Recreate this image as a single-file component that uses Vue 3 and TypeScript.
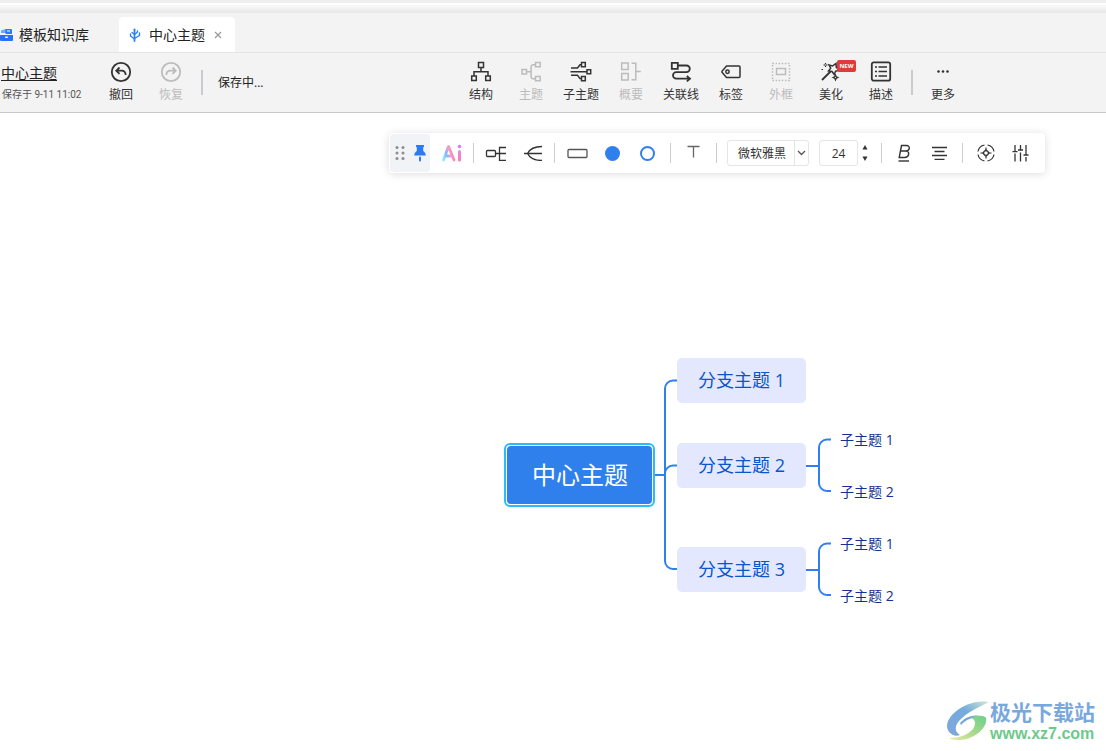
<script setup lang="ts">
import { ref } from 'vue'

interface Tool {
  id: string
  label: string
  disabled?: boolean
  badge?: string
}
interface MapNode {
  text: string
  kind: 'root' | 'branch' | 'leaf'
  x: number
  y: number
}

const tools: Tool[] = [
  { id: 'structure', label: '结构' },
  { id: 'topic', label: '主题', disabled: true },
  { id: 'subtopic', label: '子主题' },
  { id: 'summary', label: '概要', disabled: true },
  { id: 'relation', label: '关联线' },
  { id: 'tag', label: '标签' },
  { id: 'frame', label: '外框', disabled: true },
  { id: 'beautify', label: '美化', badge: 'NEW' },
  { id: 'describe', label: '描述' },
]

const nodes: MapNode[] = [
  { text: '中心主题', kind: 'root', x: 504, y: 330 },
  { text: '分支主题 1', kind: 'branch', x: 677, y: 245 },
  { text: '分支主题 2', kind: 'branch', x: 677, y: 330 },
  { text: '分支主题 3', kind: 'branch', x: 677, y: 434 },
  { text: '子主题 1', kind: 'leaf', x: 840, y: 317 },
  { text: '子主题 2', kind: 'leaf', x: 840, y: 369 },
  { text: '子主题 1', kind: 'leaf', x: 840, y: 421 },
  { text: '子主题 2', kind: 'leaf', x: 840, y: 473 },
]

const fontFamily = ref('微软雅黑')
const fontSize = ref(24)
</script>

<template>
  <div class="app">
    <div class="title-strip"></div>

    <nav class="tabs">
      <button class="tab library" type="button">
        <svg class="drawer" width="13" height="14" viewBox="0 0 13 14">
          <path d="M1 2.500L6 1v4H1z" fill="#6ea6ff" />
          <path d="M5.500 1h5.500a1 1 0 0 1 1 1v4H5.500z" fill="#2b7bf7" />
          <path d="M7 3h3" stroke="#fff" stroke-width="1" />
          <path d="M0 7h13v5a1 1 0 0 1-1 1H1a1 1 0 0 1-1-1z" fill="#2473f6" />
          <rect x="5" y="8.500" width="3" height="1.500" rx=".7" fill="#fff" />
        </svg>
        <span>模板知识库</span>
      </button>
      <div class="tab active">
        <svg width="12" height="14" viewBox="0 0 12 14" fill="none" stroke="#2f80ed" stroke-linecap="round">
          <path d="M5.500 13V1.300" stroke-width="1.800" />
          <path d="M5.500 11L1.500 8V6M5.500 10.500L10.500 7.500V5M5.500 6.500L3 4.500M5.500 6.500L8.500 4V3" stroke-width="1.400" stroke-linejoin="round" />
        </svg>
        <span>中心主题</span>
        <button class="close" type="button" aria-label="关闭">
          <svg width="8" height="8" viewBox="0 0 8 8"><path d="M1 1l6 6M7 1L1 7" stroke="#999" stroke-width="1.200" /></svg>
        </button>
      </div>
    </nav>

    <header class="ribbon">
      <div class="doc">
        <a class="doc-name" href="#">中心主题</a>
        <span class="doc-saved">保存于 9-11 11:02</span>
      </div>
      <button class="tool" type="button">
        <svg width="22" height="22" viewBox="0 0 22 22" fill="none" stroke="#333" stroke-width="1.800">
          <circle cx="11" cy="11" r="9.200" />
          <path d="M9.500 6.500L6.300 9.700l3.200 3.200M6.500 9.700h5c2.500 0 4 1.500 4.200 4.300" />
        </svg>
        <span>撤回</span>
      </button>
      <button class="tool" type="button" disabled>
        <svg width="22" height="22" viewBox="0 0 22 22" fill="none" stroke="#bcbcbc" stroke-width="1.800">
          <circle cx="11" cy="11" r="9.200" />
          <path d="M12.500 6.500l3.200 3.200-3.200 3.200M15.500 9.700h-5c-2.500 0-4 1.500-4.200 4.300" />
        </svg>
        <span>恢复</span>
      </button>
      <i class="rule"></i>
      <span class="saving">保存中...</span>

      <div class="tools">
        <button v-for="t in tools" :key="t.id" class="tool" type="button" :disabled="t.disabled">
          <svg width="22" height="22" viewBox="0 0 22 22" fill="none" stroke="currentColor" stroke-width="1.500">
            <template v-if="t.id === 'structure'">
              <path d="M8.500 1.500h5v5h-5zM1.700 15h4.600v4.600H1.700zM15.700 15h4.600v4.600h-4.600zM11 6.500v4.200M4 15v-4.300h14V15" />
            </template>
            <template v-else-if="t.id === 'topic'">
              <path d="M2 8.500h4.500v4.500H2zM15.500 1.500h4.700v4.300h-4.700zM15.500 15.500h4.700v4.300h-4.700zM6.500 10.700h4.500M15.500 3.700h-2.400a2 2 0 0 0-2 2v10a2 2 0 0 0 2 2h2.400" />
            </template>
            <template v-else-if="t.id === 'subtopic'">
              <path d="M11.500 1.500H15.300v4.200h-3.800zM17 8.700h3.700v4H17zM11.500 15.500h3.800v4.200h-3.800z" />
              <path d="M.5 10.700H17M1 7h6.500L10 3.700h1.500M1 14.300h6.500L10 17.600h1.500" />
            </template>
            <template v-else-if="t.id === 'summary'">
              <path d="M1.700 2h6.500v6.500H1.700zM1.700 12.500h6.500V19H1.700zM11.500 2.300h4.300v16.400h-4.300M15.800 10.500h5" />
            </template>
            <template v-else-if="t.id === 'relation'">
              <path d="M1.800 1.800h6v6h-6z" stroke-width="1.800" />
              <path d="M7.800 4.500h8.700a3.300 3.300 0 0 1 0 6.600H6.300a3.300 3.300 0 0 0 0 6.600h13M16.800 15l3.200 2.700-3.200 2.700" stroke-width="1.800" />
            </template>
            <template v-else-if="t.id === 'tag'">
              <path d="M6.500 5H19a1 1 0 0 1 1 1v9.500a1 1 0 0 1-1 1H6.500L2 11.300v-1.100z" />
              <circle cx="7.500" cy="10.700" r="1.700" />
            </template>
            <template v-else-if="t.id === 'frame'">
              <path d="M2.500 2.500h17v17h-17z" stroke-dasharray="1.500 1.590" />
              <path d="M6.500 7.500h9v6h-9z" />
            </template>
            <template v-else-if="t.id === 'beautify'">
              <path d="M2 19L10.500 10.500" stroke-width="1.800" />
              <path d="M9 4l3.500 1L16 2.500l.3 4 3 2.500-3.800 1.300-1.300 3.200-2.200-3-3.500-.5 2.200-2.800z" stroke-width="1.500" />
              <path d="M15.500 14l.8 1.700 1.700.8-1.700.8-.8 1.700-.8-1.700-1.700-.8 1.700-.8z" stroke-width="1.200" />
              <path d="M5.500 2v1.500M5.500 4.500V6M3.500 4h1.500M6 4h1.500M1.500 8.500H3" stroke-width="1.200" />
            </template>
            <template v-else>
              <rect x="1.800" y="1.300" width="18.400" height="18.400" rx="2" stroke-width="1.800" />
              <path d="M5 6h2M5 10.500h2M5 15h2M8.500 6H17M8.500 10.500H17M8.500 15H17" stroke-width="1.700" />
            </template>
          </svg>
          <span>{{ t.label }}</span>
          <b v-if="t.badge" class="badge">{{ t.badge }}</b>
        </button>
        <i class="rule"></i>
        <button class="tool" type="button">
          <svg width="22" height="22" viewBox="0 0 22 22" fill="#333">
            <circle cx="6.500" cy="10.500" r="1.300" /><circle cx="11" cy="10.500" r="1.300" /><circle cx="15.500" cy="10.500" r="1.300" />
          </svg>
          <span>更多</span>
        </button>
      </div>
    </header>

    <main class="canvas">
      <div class="format-bar">
        <div class="handle">
          <svg width="10" height="16" viewBox="0 0 10 16" fill="#8c8c8c">
            <circle cx="2" cy="2.500" r="1.500" /><circle cx="8" cy="2.500" r="1.500" />
            <circle cx="2" cy="8" r="1.500" /><circle cx="8" cy="8" r="1.500" />
            <circle cx="2" cy="13.500" r="1.500" /><circle cx="8" cy="13.500" r="1.500" />
          </svg>
          <button class="pin" type="button" aria-label="固定">
            <svg width="12" height="18" viewBox="0 0 12 18" fill="#2b7bf7">
              <path d="M2 1h8v1.500L9.200 3.500V7c1.500.8 2.400 2.200 2.600 4.500H.2C.4 9.200 1.300 7.800 2.800 7V3.500L2 2.500z" />
              <rect x="5" y="12.500" width="2" height="5" rx="1" />
            </svg>
          </button>
        </div>

        <div class="group tight">
          <button class="fmt" type="button" aria-label="AI">
            <svg width="22" height="20" viewBox="0 0 22 20" fill="none" stroke-linecap="round" stroke-linejoin="round">
              <defs>
                <linearGradient id="aiA" x1="0" y1="1" x2="1" y2="0.600">
                  <stop offset="0" stop-color="#86f0ff" /><stop offset="0.400" stop-color="#86b4ff" />
                  <stop offset="0.700" stop-color="#f3a0d0" /><stop offset="1" stop-color="#ff7ba8" />
                </linearGradient>
                <linearGradient id="aiI" gradientUnits="userSpaceOnUse" x1="18" y1="5" x2="18" y2="19">
                  <stop offset="0" stop-color="#dd8cf5" /><stop offset="1" stop-color="#ff7ba8" />
                </linearGradient>
              </defs>
              <path d="M2.500 17L7.500 3.500L13 17M6 13H10.500" stroke="url(#aiA)" stroke-width="2.800" />
              <rect x="17" y="7" width="3" height="11.500" rx="1.500" fill="url(#aiI)" />
              <circle cx="18.500" cy="3.500" r="1.800" fill="#d77bff" />
            </svg>
          </button>
        </div>
        <i class="line"></i>
        <div class="group tight spaced">
          <button class="fmt" type="button" aria-label="分支样式">
            <svg width="22" height="16" viewBox="0 0 22 16" fill="none" stroke="#333" stroke-width="1.300">
              <rect x="1.500" y="5.500" width="9" height="6" rx="1" /><path d="M10.500 8.500H21M21 2.500h-6.500v13H21" />
            </svg>
          </button>
          <button class="fmt" type="button" aria-label="连线样式">
            <svg width="20" height="16" viewBox="0 0 20 16" fill="none" stroke="#333" stroke-width="1.300">
              <path d="M1 8.500h18M19 1.500C12 1.500 7 3.500 4.500 8.500c2.500 5 7.500 7 14.500 7" />
            </svg>
          </button>
        </div>
        <i class="line"></i>
        <div class="group">
          <button class="fmt" type="button" aria-label="形状">
            <svg width="21" height="11" viewBox="0 0 21 11" fill="none" stroke="#555" stroke-width="1.300"><rect x="1" y="1.500" width="19" height="8" rx="1" /></svg>
          </button>
          <button class="fmt" type="button" aria-label="填充">
            <svg width="15" height="15" viewBox="0 0 15 15"><circle cx="7.500" cy="7.500" r="7.500" fill="#2f80ed" /></svg>
          </button>
          <button class="fmt" type="button" aria-label="边框">
            <svg width="15" height="15" viewBox="0 0 15 15"><circle cx="7.500" cy="7.500" r="6.500" fill="none" stroke="#2f80ed" stroke-width="2" /></svg>
          </button>
        </div>
        <i class="line"></i>
        <div class="group">
          <button class="fmt" type="button" aria-label="文字">
            <svg width="13" height="16" viewBox="0 0 13 16" fill="none" stroke="#666" stroke-width="1.300"><path d="M.5 1.500h12M6.500 1.500V12.500" /></svg>
          </button>
        </div>
        <i class="line"></i>
        <div class="font-select">
          <select v-model="fontFamily" aria-label="字体">
            <option>微软雅黑</option>
          </select>
          <svg width="9" height="6" viewBox="0 0 9 6" fill="none" stroke="#555" stroke-width="1.300"><path d="M1 1l3.500 3.500L8 1" /></svg>
        </div>
        <div class="size">
          <input v-model="fontSize" type="text" aria-label="字号" />
          <div class="steps">
            <button type="button" aria-label="增大" @click="fontSize++"><svg width="6" height="5" viewBox="0 0 6 5"><path d="M3 0l2.500 4.500h-5z" fill="#333" /></svg></button>
            <button type="button" aria-label="减小" @click="fontSize--"><svg width="6" height="5" viewBox="0 0 6 5"><path d="M3 5L.5.500h5z" fill="#333" /></svg></button>
          </div>
        </div>
        <i class="line"></i>
        <div class="group">
          <button class="fmt" type="button" aria-label="加粗">
            <svg width="15" height="18" viewBox="0 0 15 18" fill="none" stroke="#333" stroke-width="1.400">
              <path d="M4.500 1.500h5c4 0 3.700 5.500-.8 5.500H3.500h5.500c4.200 0 3.300 6.500-1.500 6.500H2.200z" /><path d="M1.500 17H12" />
            </svg>
          </button>
          <button class="fmt" type="button" aria-label="对齐">
            <svg width="15" height="14" viewBox="0 0 15 14" stroke="#333" stroke-width="1.300"><path d="M0 1.500h15M2.500 5.500h10M0 9.500h15M2.500 13.300h10" /></svg>
          </button>
        </div>
        <i class="line"></i>
        <div class="group">
          <button class="fmt" type="button" aria-label="定位">
            <svg width="18" height="18" viewBox="0 0 18 18" fill="none" stroke="#333" stroke-width="1.200">
              <path d="M1 7.500A8.200 8.200 0 0 1 7.500 1M10.500 1A8.200 8.200 0 0 1 17 7.500M17 10.500A8.200 8.200 0 0 1 10.500 17M7.500 17A8.200 8.200 0 0 1 1 10.500" />
              <path d="M9 5.700L12.300 9 9 12.300 5.700 9zM9 3.500v4M9 10.500v4M3.500 9h4M10.500 9h4" />
            </svg>
          </button>
          <button class="fmt" type="button" aria-label="设置">
            <svg width="17" height="18" viewBox="0 0 17 18" fill="none" stroke="#333" stroke-width="1.300">
              <path d="M3 1v6M.5 7.700h5M3 9.500V17.500M8.500 1v4.500M6 6h5M8.500 8.500V17.500M14 1v9.500M11.500 11h5M14 13V17.500" />
            </svg>
          </button>
        </div>
      </div>

      <svg class="links" width="900" height="500" viewBox="0 0 900 500" fill="none" stroke="#2f80ed" stroke-width="2">
        <path d="M655 362H665" />
        <path d="M677 267.500H673a8 8 0 0 0-8 8V448a8 8 0 0 0 8 8H677M677 352.500H673a8 8 0 0 0-8 8" />
        <path d="M806 353H819M831 326.500H827a8 8 0 0 0-8 8V370a8 8 0 0 0 8 8H831" />
        <path d="M806 457H819M831 430.500H827a8 8 0 0 0-8 8V474a8 8 0 0 0 8 8H831" />
      </svg>
      <div
        v-for="(n, i) in nodes"
        :key="i"
        class="node"
        :class="n.kind"
        :style="{ left: n.x + 'px', top: n.y + 'px' }"
      >
        <span>{{ n.text }}</span>
      </div>

      <div class="mark">
        <svg width="44" height="42" viewBox="0 0 44 42">
          <defs>
            <linearGradient id="mkBlue" x1="0" y1="1" x2="1" y2="0">
              <stop offset="0" stop-color="#7fa6dd" /><stop offset="0.600" stop-color="#74acdc" /><stop offset="1" stop-color="#d3ead0" />
            </linearGradient>
            <linearGradient id="mkGreen" x1="0" y1="1" x2="1" y2="0">
              <stop offset="0" stop-color="#ecebaa" /><stop offset="0.500" stop-color="#a5d98a" /><stop offset="1" stop-color="#6ccf8d" />
            </linearGradient>
          </defs>
          <path d="M43 2C30 0 16 5 7 14C-1 22-1 31 7 35C9 36 12 36 14 35C8 31 9 26 13 21C20 13 31 8 43 2z" fill="url(#mkBlue)" />
          <path d="M14 23C19 17 27 14 35 16C28 17 20 19 15 25z" fill="#74a6dc" />
          <path d="M25 18C31 15 38 15 40 18C42 28 28 39 15 40C10 40 6 40 3 38C13 38 22 35 27 29C30 24 30 20 25 18z" fill="url(#mkGreen)" />
        </svg>
        <div class="mark-text">
          <strong>极光下载站</strong>
          <span>www.xz7.com</span>
        </div>
      </div>
    </main>
  </div>
</template>

<style>
html,
body {
  height: 100%;
  overflow: hidden;
}
#app {
  height: 100%;
}
</style>

<style scoped>
.app {
  display: flex;
  flex-direction: column;
  height: 100%;
  background: #f3f3f3;
  color: #222;
  font-family: "Open Sans", "Noto Sans CJK SC", sans-serif;
  font-size: 14px;
}
button {
  margin: 0;
  padding: 0;
  border: 0;
  background: none;
  color: inherit;
  font: inherit;
}
svg {
  display: block;
  flex: none;
}
.title-strip {
  flex: none;
  height: 13px;
  background: linear-gradient(#efefef 0 3px, #fff 3px, #e6e6e6);
}
.tabs {
  display: flex;
  flex: none;
  align-items: flex-end;
  height: 39px;
  border-bottom: 1px solid #e4e4e4;
}
.tab {
  display: flex;
  align-items: center;
  height: 35px;
  line-height: 20px;
  white-space: nowrap;
}
.library {
  width: 119px;
  gap: 6px;
}
.active {
  padding: 0 13px 0 10px;
  background: #fff;
  border-radius: 4px 4px 0 0;
}
.active span {
  margin: 0 9px 0 8px;
}
.ribbon {
  display: flex;
  flex: none;
  align-items: center;
  height: 59px;
  border-bottom: 1px solid #c8c8cc;
  white-space: nowrap;
}
.doc {
  display: flex;
  flex-direction: column;
  width: 95px;
  padding-left: 1px;
  gap: 4px;
}
.doc-name {
  color: #222;
  line-height: 20px;
  text-underline-offset: 2px;
}
.doc-saved {
  padding-left: 1px;
  color: #555;
  font-family: Roboto, "Noto Sans CJK SC", sans-serif;
  font-size: 10px;
  line-height: 16px;
}
.tool {
  position: relative;
  display: flex;
  flex-direction: column;
  align-items: center;
  width: 50px;
  gap: 3px;
  color: #333;
  font-size: 12px;
  line-height: 18px;
}
.tool:disabled {
  color: #bcbcbc;
}
.rule {
  width: 2px;
  height: 25px;
  background: #c9cacf;
}
.ribbon > .rule {
  margin: 0 15px 0 5px;
}
.saving {
  width: 238px;
  font-size: 12px;
  line-height: 18px;
}
.tools {
  display: flex;
  align-items: center;
}
.tools .rule {
  margin: 0 5px;
}
.badge {
  position: absolute;
  top: -1px;
  left: 31px;
  width: 19px;
  height: 12px;
  border-radius: 2px;
  background: #e03a3a;
  color: #fff;
  font-size: 6px;
  line-height: 12px;
  text-align: center;
}
.canvas {
  position: relative;
  flex: 1;
  overflow: hidden;
  background: #fff;
}
.format-bar {
  display: flex;
  align-items: center;
  width: max-content;
  height: 40px;
  margin: 20px 61px 0 auto;
  padding: 0 2px 0 1px;
  box-sizing: border-box;
  border-radius: 4px;
  background: #fff;
  box-shadow: 0 1px 8px rgba(0, 0, 0, 0.14);
}
.handle {
  display: flex;
  align-items: center;
  justify-content: center;
  gap: 9px;
  width: 40px;
  height: 38px;
  border-radius: 4px;
  background: #f1f3f6;
}
.group {
  display: flex;
  padding: 0 5px;
}
.tight {
  padding: 0 4px;
}
.spaced {
  gap: 2px;
}
.fmt {
  display: flex;
  align-items: center;
  justify-content: center;
  width: 35px;
  height: 36px;
}
.line {
  width: 1px;
  height: 20px;
  background: #ccc;
}
.font-select {
  display: flex;
  align-items: center;
  width: 82px;
  height: 26px;
  margin: 0 10px;
  box-sizing: border-box;
  border: 1px solid #e5e5e5;
  border-radius: 3px;
}
.font-select select {
  width: 67px;
  height: 24px;
  margin: 0 2px 0 0;
  padding: 0 0 0 10px;
  border: 0;
  border-right: 1px solid #e5e5e5;
  border-radius: 0;
  appearance: none;
  background: none;
  color: #333;
  font: 12px "Open Sans", "Noto Sans CJK SC", sans-serif;
}
.size {
  display: flex;
  align-items: center;
  gap: 4px;
  margin-right: 13px;
}
.size input {
  width: 39px;
  height: 26px;
  padding: 0;
  box-sizing: border-box;
  border: 1px solid #e5e5e5;
  border-radius: 3px;
  background: none;
  color: #333;
  font: 12px "Open Sans", "Noto Sans CJK SC", sans-serif;
  text-align: center;
}
.steps {
  display: flex;
  flex-direction: column;
  gap: 6px;
}
.links {
  position: absolute;
  top: 0;
  left: 0;
  pointer-events: none;
}
.node {
  position: absolute;
  box-sizing: border-box;
  white-space: nowrap;
}
.root {
  padding: 1px;
  border: 2px solid #2dbbff;
  border-radius: 6px;
  background: #fff;
  color: #fff;
  font-size: 24px;
  line-height: 58px;
}
.root span {
  display: block;
  padding: 0 24px 0 25px;
  border-radius: 4px;
  background: #2f80ed;
}
.branch {
  width: 129px;
  border-radius: 5px;
  background: #e3e8ff;
  color: #0a56c9;
  font-size: 18px;
  line-height: 45px;
  text-align: center;
}
.leaf {
  color: #16318f;
  font-size: 14px;
  line-height: 20px;
}
.mark {
  position: absolute;
  right: 11px;
  bottom: 8px;
  display: flex;
  align-items: center;
}
.mark-text {
  display: flex;
  flex-direction: column;
}
.mark strong {
  color: #78a8dc;
  font-size: 21px;
  font-weight: 700;
  line-height: 26px;
}
.mark span {
  color: #6cca8c;
  font: 700 16px/18px "Liberation Sans", sans-serif;
}
</style>
